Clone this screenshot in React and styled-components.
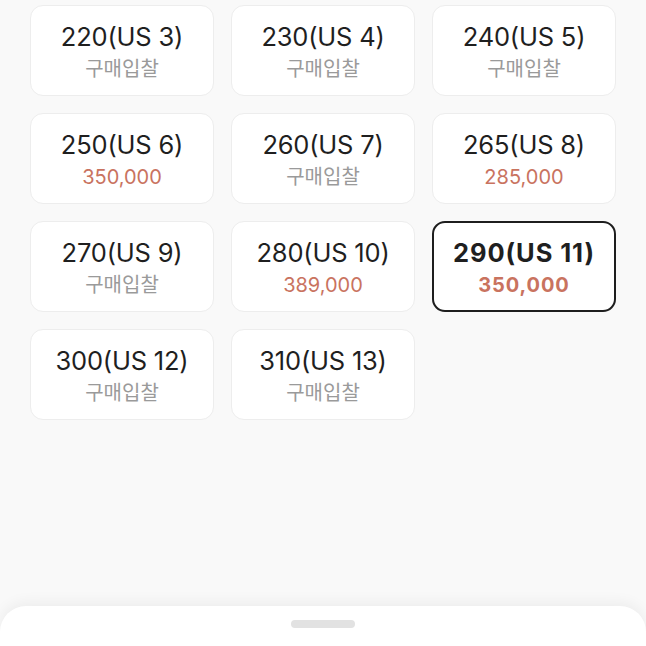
import React from "react";
import styled, { createGlobalStyle } from "styled-components";

const Global = createGlobalStyle`
  html, body { margin: 0; padding: 0; }
  body {
    background: #f9f9f9;
    font-family: Inter, "Noto Sans CJK KR", sans-serif;
    width: 646px;
    height: 646px;
    overflow: hidden;
  }
`;

const Page = styled.div`
  position: relative;
  width: 646px;
  height: 646px;
  overflow: hidden;
`;

const Grid = styled.div`
  display: grid;
  grid-template-columns: repeat(3, 184px);
  grid-auto-rows: 91px;
  gap: 17px;
  padding: 5px 30px 0;
`;

const Card = styled.div`
  box-sizing: border-box;
  background: #fff;
  border: ${(p) => (p.$selected ? "2px solid #1e1e1e" : "1px solid #ededed")};
  border-radius: 13px;
  display: flex;
  flex-direction: column;
  align-items: center;
  justify-content: center;
  gap: 6px;
  padding-top: 3px;
`;

const Size = styled.div`
  font-family: Inter, "Noto Sans CJK KR", sans-serif;
  font-size: 25.5px;
  line-height: 28px;
  color: #1f1f1f;
  font-weight: ${(p) => (p.$selected ? 700 : 400)};
  letter-spacing: ${(p) => (p.$selected ? "0.9px" : "-0.2px")};
`;

const Sub = styled.div`
  font-family: Inter, "Noto Sans CJK KR", sans-serif;
  font-size: 20px;
  line-height: 24px;
  color: ${(p) => (p.$price ? "#c9735f" : "#9a9a9a")};
  font-weight: ${(p) => (p.$selected ? 700 : 400)};
  letter-spacing: ${(p) => (p.$selected ? "0.9px" : "0")};
`;

const Sheet = styled.div`
  position: absolute;
  left: 0;
  right: 0;
  top: 606px;
  bottom: -30px;
  background: #fff;
  border-radius: 26px 26px 0 0;
  box-shadow: 0 -4px 14px rgba(0, 0, 0, 0.05);
  display: flex;
  justify-content: center;
  padding-top: 14px;
  box-sizing: border-box;
`;

const Handle = styled.div`
  width: 64px;
  height: 8px;
  border-radius: 4px;
  background: #e2e2e2;
`;

const items = [
  ["220(US 3)", null],
  ["230(US 4)", null],
  ["240(US 5)", null],
  ["250(US 6)", "350,000"],
  ["260(US 7)", null],
  ["265(US 8)", "285,000"],
  ["270(US 9)", null],
  ["280(US 10)", "389,000"],
  ["290(US 11)", "350,000", true],
  ["300(US 12)", null],
  ["310(US 13)", null],
];

export default function App() {
  return (
    <Page>
      <Global />
      <Grid>
        {items.map(([size, price, sel]) => (
          <Card key={size} $selected={sel}>
            <Size $selected={sel}>{size}</Size>
            <Sub $price={!!price} $selected={sel}>
              {price || "구매입찰"}
            </Sub>
          </Card>
        ))}
      </Grid>
      <Sheet>
        <Handle />
      </Sheet>
    </Page>
  );
}
